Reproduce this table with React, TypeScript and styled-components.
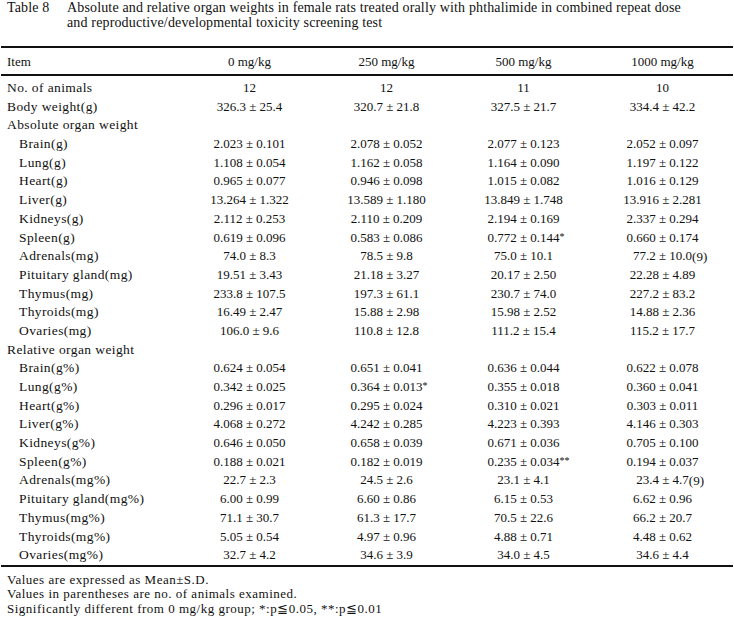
import React from 'react';
import styled, { createGlobalStyle } from 'styled-components';

type Row = { label: string; sub?: boolean; values?: string[] };

// values may carry a trailing note ("*", "**", "(9)") after a "|" so it hangs outside the centred value
const rows: Row[] = [
  { label: 'No. of animals', values: ['12', '12', '11', '10'] },
  { label: 'Body weight(g)', values: ['326.3 ± 25.4', '320.7 ± 21.8', '327.5 ± 21.7', '334.4 ± 42.2'] },
  { label: 'Absolute organ weight' },
  { label: 'Brain(g)', sub: true, values: ['2.023 ± 0.101', '2.078 ± 0.052', '2.077 ± 0.123', '2.052 ± 0.097'] },
  { label: 'Lung(g)', sub: true, values: ['1.108 ± 0.054', '1.162 ± 0.058', '1.164 ± 0.090', '1.197 ± 0.122'] },
  { label: 'Heart(g)', sub: true, values: ['0.965 ± 0.077', '0.946 ± 0.098', '1.015 ± 0.082', '1.016 ± 0.129'] },
  { label: 'Liver(g)', sub: true, values: ['13.264 ± 1.322', '13.589 ± 1.180', '13.849 ± 1.748', '13.916 ± 2.281'] },
  { label: 'Kidneys(g)', sub: true, values: ['2.112 ± 0.253', '2.110 ± 0.209', '2.194 ± 0.169', '2.337 ± 0.294'] },
  { label: 'Spleen(g)', sub: true, values: ['0.619 ± 0.096', '0.583 ± 0.086', '0.772 ± 0.144|*', '0.660 ± 0.174'] },
  { label: 'Adrenals(mg)', sub: true, values: ['74.0 ± 8.3', '78.5 ± 9.8', '75.0 ± 10.1', '77.2 ± 10.0|(9)'] },
  { label: 'Pituitary gland(mg)', sub: true, values: ['19.51 ± 3.43', '21.18 ± 3.27', '20.17 ± 2.50', '22.28 ± 4.89'] },
  { label: 'Thymus(mg)', sub: true, values: ['233.8 ± 107.5', '197.3 ± 61.1', '230.7 ± 74.0', '227.2 ± 83.2'] },
  { label: 'Thyroids(mg)', sub: true, values: ['16.49 ± 2.47', '15.88 ± 2.98', '15.98 ± 2.52', '14.88 ± 2.36'] },
  { label: 'Ovaries(mg)', sub: true, values: ['106.0 ± 9.6', '110.8 ± 12.8', '111.2 ± 15.4', '115.2 ± 17.7'] },
  { label: 'Relative organ weight' },
  { label: 'Brain(g%)', sub: true, values: ['0.624 ± 0.054', '0.651 ± 0.041', '0.636 ± 0.044', '0.622 ± 0.078'] },
  { label: 'Lung(g%)', sub: true, values: ['0.342 ± 0.025', '0.364 ± 0.013|*', '0.355 ± 0.018', '0.360 ± 0.041'] },
  { label: 'Heart(g%)', sub: true, values: ['0.296 ± 0.017', '0.295 ± 0.024', '0.310 ± 0.021', '0.303 ± 0.011'] },
  { label: 'Liver(g%)', sub: true, values: ['4.068 ± 0.272', '4.242 ± 0.285', '4.223 ± 0.393', '4.146 ± 0.303'] },
  { label: 'Kidneys(g%)', sub: true, values: ['0.646 ± 0.050', '0.658 ± 0.039', '0.671 ± 0.036', '0.705 ± 0.100'] },
  { label: 'Spleen(g%)', sub: true, values: ['0.188 ± 0.021', '0.182 ± 0.019', '0.235 ± 0.034|**', '0.194 ± 0.037'] },
  { label: 'Adrenals(mg%)', sub: true, values: ['22.7 ± 2.3', '24.5 ± 2.6', '23.1 ± 4.1', '23.4 ± 4.7|(9)'] },
  { label: 'Pituitary gland(mg%)', sub: true, values: ['6.00 ± 0.99', '6.60 ± 0.86', '6.15 ± 0.53', '6.62 ± 0.96'] },
  { label: 'Thymus(mg%)', sub: true, values: ['71.1 ± 30.7', '61.3 ± 17.7', '70.5 ± 22.6', '66.2 ± 20.7'] },
  { label: 'Thyroids(mg%)', sub: true, values: ['5.05 ± 0.54', '4.97 ± 0.96', '4.88 ± 0.71', '4.48 ± 0.62'] },
  { label: 'Ovaries(mg%)', sub: true, values: ['32.7 ± 4.2', '34.6 ± 3.9', '34.0 ± 4.5', '34.6 ± 4.4'] },
];

const doses = ['0 mg/kg', '250 mg/kg', '500 mg/kg', '1000 mg/kg'];

const GlobalStyle = createGlobalStyle`
  body {
    margin: 0;
    background: #fff;
    color: #111;
    font-family: "Liberation Serif", "DejaVu Serif", serif;
  }
`;

const Page = styled.div`
  width: 734px;
  padding: 1px 1px 0 1px;
  box-sizing: border-box;
`;

const Caption = styled.div`
  display: flex;
  padding-left: 6px;
  font-size: 14px;
  letter-spacing: 0.15px;
  line-height: 14.5px;
`;

const CaptionNo = styled.div`
  width: 60px;
  flex-shrink: 0;
`;

const Table = styled.table`
  margin-top: 16px;
  width: 732px;
  border-collapse: collapse;
  table-layout: fixed;
  font-size: 13px;
  border-top: 2px solid #111;
  border-bottom: 2px solid #111;
`;

const HeadRow = styled.tr`
  height: 28px;
  border-bottom: 2px solid #111;
`;

const Th = styled.th<{ $left?: boolean }>`
  font-weight: normal;
  text-align: ${(p) => (p.$left ? 'left' : 'center')};
  padding: 1px 0 0 ${(p) => (p.$left ? '6px' : '0')};
  vertical-align: middle;
`;

const Body = styled.tbody`
  tr:first-child td {
    padding-top: 3px;
  }
`;

const Tr = styled.tr`
  height: 18.68px;
`;

const Label = styled.td<{ $sub?: boolean }>`
  padding: 0 0 0 ${(p) => (p.$sub ? '18px' : '6px')};
  white-space: nowrap;
  line-height: 18.68px;
  font-size: 13.5px;
  letter-spacing: 0.4px;
`;

const Value = styled.td`
  text-align: center;
  padding: 0;
  line-height: 18.68px;
  white-space: nowrap;
`;

const Num = styled.span`
  position: relative;
`;

const Note = styled.span`
  position: absolute;
  left: 100%;
  top: 0;
`;

const Star = styled(Note)`
  font-size: 10px;
  top: -2px;
`;

const Notes = styled.div`
  margin-top: 6px;
  padding-left: 6px;
  font-size: 13px;
  letter-spacing: 0.5px;
  line-height: 14.6px;
`;

const renderValue = (v: string) => {
  const [main, note] = v.split('|');
  return (
    <Num>
      {main}
      {note && (note.startsWith('*') ? <Star>{note}</Star> : <Note>{note}</Note>)}
    </Num>
  );
};

const App: React.FC = () => {
  return (
    <Page>
      <GlobalStyle />
      <Caption>
        <CaptionNo>Table 8</CaptionNo>
        <div>
          Absolute and relative organ weights in female rats treated orally with phthalimide in combined repeat dose
          <br />
          and reproductive/developmental toxicity screening test
        </div>
      </Caption>

      <Table>
        <colgroup>
          <col style={{ width: 180 }} />
          <col style={{ width: 137 }} />
          <col style={{ width: 137 }} />
          <col style={{ width: 137 }} />
          <col style={{ width: 141 }} />
        </colgroup>
        <thead>
          <HeadRow>
            <Th $left>Item</Th>
            {doses.map((d) => (
              <Th key={d}>{d}</Th>
            ))}
          </HeadRow>
        </thead>
        <Body>
          {rows.map((r) => (
            <Tr key={r.label}>
              <Label $sub={r.sub}>{r.label}</Label>
              {(r.values ?? ['', '', '', '']).map((v, i) => (
                <Value key={i}>{v && renderValue(v)}</Value>
              ))}
            </Tr>
          ))}
        </Body>
      </Table>

      <Notes>
        <div>Values are expressed as Mean±S.D.</div>
        <div>Values in parentheses are no. of animals examined.</div>
        <div>Significantly different from 0 mg/kg group; *:p≦0.05, **:p≦0.01</div>
      </Notes>
    </Page>
  );
};

export default App;
